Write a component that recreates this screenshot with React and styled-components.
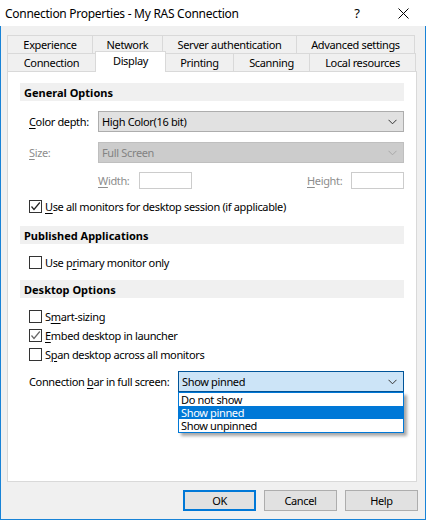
import React from 'react';
import styled, { createGlobalStyle } from 'styled-components';

const Global = createGlobalStyle`
  html, body { margin: 0; padding: 0; background: #fff; }
  body { font-family: "Segoe UI", "Noto Sans", sans-serif; font-size: 11px; color: #000; }
  * { box-sizing: border-box; }
`;

const FONT = `"Segoe UI", "Noto Sans", sans-serif`;

const Window = styled.div`
  width: 426px;
  height: 520px;
  display: flex;
  flex-direction: column;
  background: #fff;
  font-family: ${FONT};
  letter-spacing: -0.35px;
`;

const TitleBar = styled.div`
  height: 26px;
  display: flex;
  align-items: center;
  background: #fff;
`;

const Title = styled.div`
  flex: 1;
  padding-left: 5px;
  font-size: 12px;
  letter-spacing: -0.28px;
  color: #000;
`;

const TitleBtn = styled.div`
  width: 46px;
  height: 26px;
  display: flex;
  align-items: center;
  justify-content: center;
  font-size: 13px;
`;

const Body = styled.div`
  flex: 1;
  background: #f0f0f0;
  border: 1px solid #1883d7;
  border-top: none;
  padding: 9px 8px 0 6px;
  display: flex;
  flex-direction: column;
`;

const TabRow = styled.div`
  display: flex;
  height: 18px;
`;

const Tab = styled.div`
  width: ${p => p.$w}px;
  height: ${p => (p.$active ? 21 : 18)}px;
  margin-top: ${p => (p.$active ? -2 : 0)}px;
  margin-left: ${p => (p.$first ? 0 : -1)}px;
  position: relative;
  z-index: ${p => (p.$active ? 2 : 0)};
  border: 1px solid #d9d9d9;
  border-bottom: none;
  background: ${p => (p.$active ? '#fff' : '#f0f0f0')};
  display: flex;
  justify-content: center;
  align-items: ${p => (p.$active ? 'flex-start' : 'center')};
  padding-top: ${p => (p.$active ? 1 : 0)}px;
  line-height: 15px;
  font-size: 11px;
`;

const Panel = styled.div`
  height: 411px;
  background: #fff;
  border: 1px solid #d9d9d9;
  padding: 11px 12px 0 12px;
  display: flex;
  flex-direction: column;
  position: relative;
  z-index: 1;
`;

const Band = styled.div`
  height: 18px;
  margin-top: ${p => p.$mt || 0}px;
  background: #f0f0f0;
  padding-left: 4px;
  display: flex;
  align-items: center;
  font-weight: bold;
  font-size: 11px;
  letter-spacing: 0;
`;

const FieldRow = styled.div`
  height: 21px;
  margin-top: ${p => p.$mt}px;
  padding-left: 9px;
  display: flex;
  align-items: center;
`;

const Label = styled.div`
  width: ${p => p.$w}px;
  flex: none;
  color: ${p => (p.$disabled ? '#8d8d8d' : '#000')};
  white-space: nowrap;
`;

const Mn = styled.span`
  text-decoration: underline;
  text-underline-offset: 2px;
`;

const SelectBox = styled.div`
  flex: 1;
  height: 21px;
  border: 1px solid ${p => p.$border};
  background: ${p => p.$bg};
  color: ${p => p.$color || '#000'};
  display: flex;
  align-items: center;
  justify-content: space-between;
  padding: 0 6px 0 3px;
`;

const SizeRow = styled.div`
  height: 17px;
  margin-top: 9px;
  padding-left: 78px;
  display: flex;
  align-items: center;
`;

const SmallInput = styled.div`
  width: 53px;
  height: 17px;
  border: 1px solid #cccccc;
  background: #fff;
  flex: none;
`;

const Spacer = styled.div`
  flex: 1;
`;

const CheckRow = styled.div`
  height: 13px;
  margin-top: ${p => p.$mt}px;
  padding-left: 9px;
  display: flex;
  align-items: center;
  gap: 3px;
  white-space: nowrap;
`;

const Box = styled.div`
  width: 13px;
  height: 13px;
  border: 1px solid #333;
  background: #fff;
  flex: none;
  display: flex;
  align-items: center;
  justify-content: center;
`;

const ConnWrap = styled.div`
  position: relative;
  width: 226px;
  flex: none;
  display: flex;
`;

const DropList = styled.div`
  position: absolute;
  left: 0;
  top: 21px;
  width: 226px;
  border: 1px solid #0078d7;
  background: #fff;
  box-shadow: 3px 3px 3px rgba(0, 0, 0, 0.35);
  z-index: 5;
`;

const DropItem = styled.div`
  height: 13px;
  line-height: 13px;
  padding-left: 2px;
  background: ${p => (p.$sel ? '#0078d7' : '#fff')};
  color: ${p => (p.$sel ? '#fff' : '#000')};
  font-size: 11px;
  overflow: hidden;
`;

const ButtonRow = styled.div`
  display: flex;
  justify-content: flex-end;
  gap: 8px;
  margin-top: 8px;
  margin-right: -1px;
`;

const Button = styled.div`
  width: 73px;
  height: 21px;
  border: ${p => (p.$default ? '2px solid #0078d7' : '1px solid #adadad')};
  background: #e1e1e1;
  display: flex;
  align-items: center;
  justify-content: center;
  font-size: 11px;
`;

const Chevron = ({ color = '#333' }) => (
  <svg width="9" height="6" viewBox="0 0 9 6">
    <polyline points="0.5,0.8 4.5,4.8 8.5,0.8" fill="none" stroke={color} strokeWidth="1" />
  </svg>
);

const Check = ({ color = '#222' }) => (
  <svg width="11" height="11" viewBox="0 0 11 11">
    <polyline points="1.5,5.5 4,8.5 9.8,1.5" fill="none" stroke={color} strokeWidth="1.2" />
  </svg>
);

const CheckBox = ({ checked, color }) => <Box>{checked && <Check color={color} />}</Box>;

export default function App() {
  return (
    <Window>
      <Global />
      <TitleBar>
        <Title>Connection Properties - My RAS Connection</Title>
        <TitleBtn>?</TitleBtn>
        <TitleBtn>
          <svg width="11" height="11" viewBox="0 0 11 11">
            <line x1="0.5" y1="0.5" x2="10.5" y2="10.5" stroke="#000" strokeWidth="1" />
            <line x1="10.5" y1="0.5" x2="0.5" y2="10.5" stroke="#000" strokeWidth="1" />
          </svg>
        </TitleBtn>
      </TitleBar>
      <Body>
        <TabRow>
          <Tab $w={86} $first>Experience</Tab>
          <Tab $w={71}>Network</Tab>
          <Tab $w={135}>Server authentication</Tab>
          <Tab $w={119}>Advanced settings</Tab>
        </TabRow>
        <TabRow>
          <Tab $w={89} $first>Connection</Tab>
          <Tab $w={71} $active>Display</Tab>
          <Tab $w={69}>Printing</Tab>
          <Tab $w={77}>Scanning</Tab>
          <Tab $w={107}>Local resources</Tab>
        </TabRow>
        <Panel>
          <Band>General Options</Band>
          <FieldRow $mt={10}>
            <Label $w={69}><Mn>C</Mn>olor depth:</Label>
            <SelectBox $border="#adadad" $bg="#e1e1e1">
              <span>High Color(16 bit)</span>
              <Chevron />
            </SelectBox>
          </FieldRow>
          <FieldRow $mt={10}>
            <Label $w={69} $disabled><Mn>S</Mn>ize:</Label>
            <SelectBox $border="#bfbfbf" $bg="#cccccc" $color="#838383">
              <span>Full Screen</span>
              <Chevron color="#a8a8a8" />
            </SelectBox>
          </FieldRow>
          <SizeRow>
            <Label $w={41} $disabled><Mn>W</Mn>idth:</Label>
            <SmallInput />
            <Spacer />
            <Label $w={44} $disabled><Mn>H</Mn>eight:</Label>
            <SmallInput />
          </SizeRow>
          <CheckRow $mt={11}>
            <CheckBox checked />
            <span><Mn>U</Mn>se all monitors for desktop session (if applicable)</span>
          </CheckRow>
          <Band $mt={13}>Published Applications</Band>
          <CheckRow $mt={12}>
            <CheckBox />
            <span>Use p<Mn>r</Mn>imary monitor only</span>
          </CheckRow>
          <Band $mt={11}>Desktop Options</Band>
          <CheckRow $mt={12}>
            <CheckBox />
            <span>S<Mn>m</Mn>art-sizing</span>
          </CheckRow>
          <CheckRow $mt={6}>
            <CheckBox checked color="#666" />
            <span><Mn>E</Mn>mbed desktop in launcher</span>
          </CheckRow>
          <CheckRow $mt={6}>
            <CheckBox />
            <span>S<Mn>p</Mn>an desktop across all monitors</span>
          </CheckRow>
          <FieldRow $mt={10}>
            <Label $w={149}>Connection <Mn>b</Mn>ar in full screen:</Label>
            <ConnWrap>
              <SelectBox $border="#005499" $bg="#cce4f7">
                <span>Show pinned</span>
                <Chevron />
              </SelectBox>
              <DropList>
                <DropItem>Do not show</DropItem>
                <DropItem $sel>Show pinned</DropItem>
                <DropItem>Show unpinned</DropItem>
              </DropList>
            </ConnWrap>
          </FieldRow>
        </Panel>
        <ButtonRow>
          <Button $default>OK</Button>
          <Button>Cancel</Button>
          <Button>Help</Button>
        </ButtonRow>
      </Body>
    </Window>
  );
}
